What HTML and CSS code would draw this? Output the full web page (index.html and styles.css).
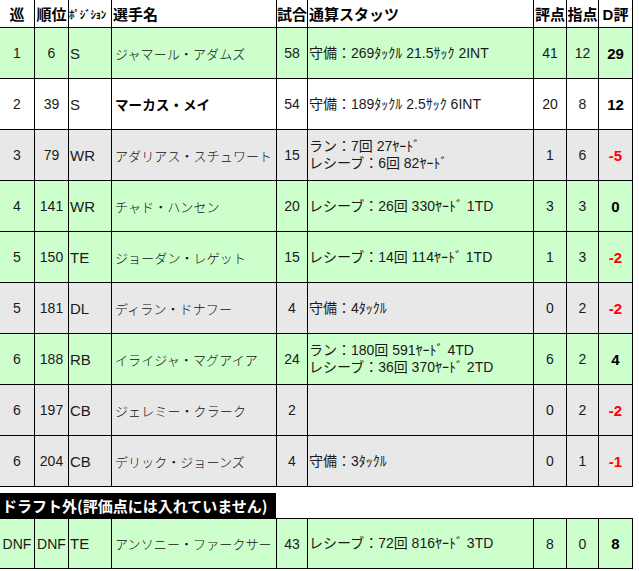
FILE: index.html
```html
<!DOCTYPE html>
<html lang="ja">
<head>
<meta charset="utf-8">
<link rel="stylesheet" href="styles.css">
</head>
<body>
<table class="grid">
  <colgroup>
    <col class="c1"><col class="c2"><col class="c3"><col class="c4"><col class="c5"><col class="c6"><col class="c7"><col class="c8"><col class="c9">
  </colgroup>
  <thead>
    <tr class="head">
      <th class="ctr">巡</th>
      <th class="ctr">順位</th>
      <th class="pos">ﾎﾟｼﾞｼｮﾝ</th>
      <th class="left">選手名</th>
      <th class="ctr">試合</th>
      <th class="left">通算スタッツ</th>
      <th class="ctr">評点</th>
      <th class="ctr">指点</th>
      <th class="ctr">D評</th>
    </tr>
  </thead>
  <tbody>
    <tr class="green">
      <td class="ctr">1</td><td class="ctr">6</td><td class="p">S</td><td class="name">ジャマール・アダムズ</td><td class="ctr">58</td>
      <td class="stat">守備：269ﾀｯｸﾙ 21.5ｻｯｸ 2INT</td><td class="ctr">41</td><td class="ctr">12</td><td class="ctr d">29</td>
    </tr>
    <tr class="white">
      <td class="ctr">2</td><td class="ctr">39</td><td class="p">S</td><td class="name b">マーカス・メイ</td><td class="ctr">54</td>
      <td class="stat">守備：189ﾀｯｸﾙ 2.5ｻｯｸ 6INT</td><td class="ctr">20</td><td class="ctr">8</td><td class="ctr d">12</td>
    </tr>
    <tr class="gray">
      <td class="ctr">3</td><td class="ctr">79</td><td class="p">WR</td><td class="name">アダリアス・スチュワート</td><td class="ctr">15</td>
      <td class="stat">ラン：7回 27ﾔｰﾄﾞ<br>レシーブ：6回 82ﾔｰﾄﾞ</td><td class="ctr">1</td><td class="ctr">6</td><td class="ctr d neg">-5</td>
    </tr>
    <tr class="green">
      <td class="ctr">4</td><td class="ctr">141</td><td class="p">WR</td><td class="name">チャド・ハンセン</td><td class="ctr">20</td>
      <td class="stat">レシーブ：26回 330ﾔｰﾄﾞ 1TD</td><td class="ctr">3</td><td class="ctr">3</td><td class="ctr d">0</td>
    </tr>
    <tr class="green">
      <td class="ctr">5</td><td class="ctr">150</td><td class="p">TE</td><td class="name">ジョーダン・レゲット</td><td class="ctr">15</td>
      <td class="stat">レシーブ：14回 114ﾔｰﾄﾞ 1TD</td><td class="ctr">1</td><td class="ctr">3</td><td class="ctr d neg">-2</td>
    </tr>
    <tr class="gray">
      <td class="ctr">5</td><td class="ctr">181</td><td class="p">DL</td><td class="name">ディラン・ドナフー</td><td class="ctr">4</td>
      <td class="stat">守備：4ﾀｯｸﾙ</td><td class="ctr">0</td><td class="ctr">2</td><td class="ctr d neg">-2</td>
    </tr>
    <tr class="green">
      <td class="ctr">6</td><td class="ctr">188</td><td class="p">RB</td><td class="name">イライジャ・マグアイア</td><td class="ctr">24</td>
      <td class="stat">ラン：180回 591ﾔｰﾄﾞ 4TD<br>レシーブ：36回 370ﾔｰﾄﾞ 2TD</td><td class="ctr">6</td><td class="ctr">2</td><td class="ctr d">4</td>
    </tr>
    <tr class="gray">
      <td class="ctr">6</td><td class="ctr">197</td><td class="p">CB</td><td class="name">ジェレミー・クラーク</td><td class="ctr">2</td>
      <td class="stat"></td><td class="ctr">0</td><td class="ctr">2</td><td class="ctr d neg">-2</td>
    </tr>
    <tr class="gray">
      <td class="ctr">6</td><td class="ctr">204</td><td class="p">CB</td><td class="name">デリック・ジョーンズ</td><td class="ctr">4</td>
      <td class="stat">守備：3ﾀｯｸﾙ</td><td class="ctr">0</td><td class="ctr">1</td><td class="ctr d neg">-1</td>
    </tr>
  </tbody>
</table>
<div class="gap"></div>
<div class="banner">ドラフト外(評価点には入れていません)</div>
<table class="grid dnf">
  <colgroup>
    <col class="c1"><col class="c2"><col class="c3"><col class="c4"><col class="c5"><col class="c6"><col class="c7"><col class="c8"><col class="c9">
  </colgroup>
  <tbody>
    <tr class="green">
      <td class="ctr">DNF</td><td class="ctr">DNF</td><td class="p">TE</td><td class="name">アンソニー・ファークサー</td><td class="ctr">43</td>
      <td class="stat">レシーブ：72回 816ﾔｰﾄﾞ 3TD</td><td class="ctr">8</td><td class="ctr">0</td><td class="ctr d">8</td>
    </tr>
  </tbody>
</table>
</body>
</html>
```

FILE: styles.css
```css
html, body {
  margin: 0;
  padding: 0;
  background: #ffffff;
}
body {
  font-family: "Liberation Sans", "Noto Sans CJK JP", sans-serif;
  color: #1a1a1a;
  font-size: 14px;
  width: 639px;
}
.grid {
  border-collapse: separate;
  border-spacing: 0;
  table-layout: fixed;
  width: 633px;
}
.c1 { width: 35px; }
.c2 { width: 34px; }
.c3 { width: 43px; }
.c4 { width: 165px; }
.c5 { width: 31px; }
.c6 { width: 226px; }
.c7 { width: 33px; }
.c8 { width: 32px; }
.c9 { width: 34px; }
.grid th, .grid td {
  border-right: 1px solid #000;
  border-bottom: 1px solid #000;
  padding: 0;
  vertical-align: middle;
  white-space: nowrap;
  overflow: hidden;
  box-sizing: border-box;
}
.head th {
  height: 28px;
  font-weight: bold;
  font-size: 15px;
  color: #000;
  background: #fff;
}
.grid tbody td {
  height: 51px;
}
.ctr { text-align: center; }
.left { text-align: left; padding-left: 1px !important; }
.pos {
  text-align: left;
  font-size: 11px !important;
  letter-spacing: -0.3px;
}
.p { text-align: left; padding-left: 1px !important; font-size: 15px; }
.name {
  text-align: left;
  padding-left: 3px !important;
  font-family: "Noto Sans CJK JP", sans-serif;
  font-weight: 300;
  font-size: 13px;
  letter-spacing: 0.1px;
  color: #111;
}
.name.b { font-weight: bold; color: #000; font-size: 13.5px; }
.stat {
  text-align: left;
  padding-left: 1px !important;
  font-size: 14px;
  line-height: 17px;
}
.d { font-weight: bold; color: #000; font-size: 15px; }
.d.neg { color: #ff0000; }
.green td { background: #ccffcc; }
.gray td { background: #e8e8e8; }
.white td { background: #ffffff; }
.gap { height: 6px; }
.banner {
  width: 276px;
  height: 25px;
  background: #000;
  color: #fff;
  font-weight: bold;
  font-size: 15px;
  line-height: 25px;
  padding-left: 2px;
  box-sizing: border-box;
  white-space: nowrap;
  overflow: hidden;
  font-family: "Noto Sans CJK JP", sans-serif;
}
.dnf td { border-top: 1px solid #000; height: 51px !important; }
```
